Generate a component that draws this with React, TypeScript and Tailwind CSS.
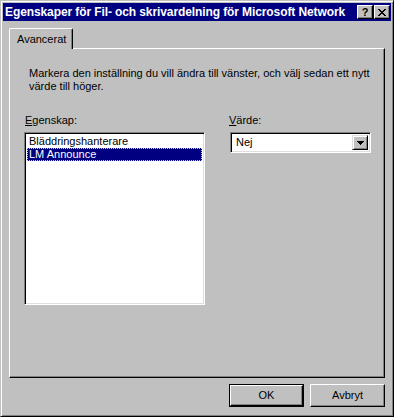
import React from "react";

const raised =
  "border border-t-white border-l-white border-r-black border-b-black shadow-[inset_-1px_-1px_0_#808080]";
const sunken =
  "border border-t-[#808080] border-l-[#808080] border-r-white border-b-white shadow-[inset_1px_1px_0_#000,inset_-1px_-1px_0_#dfdfdf]";

function TitleButton({ children }: { children: React.ReactNode }) {
  return (
    <div className={`w-[16px] h-[14px] bg-[#c0c0c0] flex items-center justify-center ${raised}`}>
      {children}
    </div>
  );
}

function PushButton({ label, isDefault }: { label: string; isDefault?: boolean }) {
  if (isDefault) {
    return (
      <div className="w-[75px] h-[23px] border border-black">
        <div
          className={`w-full h-full bg-[#c0c0c0] flex items-center justify-center ${raised}`}
        >
          {label}
        </div>
      </div>
    );
  }
  return (
    <div className={`w-[75px] h-[23px] bg-[#c0c0c0] flex items-center justify-center ${raised}`}>
      {label}
    </div>
  );
}

export default function App() {
  return (
    <div className="w-[394px] h-[417px] bg-[#c0c0c0] border border-t-[#c0c0c0] border-l-[#c0c0c0] border-r-black border-b-black shadow-[inset_1px_1px_0_#fff,inset_-1px_-1px_0_#808080] p-[2px] flex flex-col font-['Liberation_Sans',Arial,sans-serif] text-[11px] leading-[13px] text-black select-none">
      {/* title bar */}
      <div className="h-[18px] bg-[#000080] flex items-center pl-[2px] pr-[1px]">
        <span className="flex-1 text-white font-bold text-[12px] tracking-[-0.1px] whitespace-nowrap">
          Egenskaper för Fil- och skrivardelning för Microsoft Network
        </span>
        <div className="flex gap-[1px]">
          <TitleButton>
            <span className="font-bold text-[11px] leading-none mt-[1px]">?</span>
          </TitleButton>
          <TitleButton>
            <svg width="8" height="7" viewBox="0 0 8 7" shapeRendering="crispEdges">
              <path
                d="M0 0h2v1h-2zM6 0h2v1h-2zM1 1h2v1h-2zM5 1h2v1h-2zM2 2h4v1h-4zM3 3h2v1h-2zM2 4h4v1h-4zM1 5h2v1h-2zM5 5h2v1h-2zM0 6h2v1h-2zM6 6h2v1h-2z"
                fill="#000"
              />
            </svg>
          </TitleButton>
        </div>
      </div>

      {/* body */}
      <div className="flex-1 flex flex-col px-[6px] pt-[7px]">
        <div className="relative z-10 -mb-[1px] w-[64px] h-[21px] bg-[#c0c0c0] border-t border-l border-t-white border-l-white border-r border-r-black rounded-tl-[2px] rounded-tr-[2px] shadow-[inset_-1px_0_0_#808080] flex items-center pl-[7px]">
          Avancerat
        </div>
        <div className="h-[330px] bg-[#c0c0c0] border border-t-white border-l-white border-r-black border-b-black shadow-[inset_-1px_-1px_0_#808080] pt-[18px] pl-[14px] flex flex-col">
          <p className="ml-[5px] w-[345px]">
            Markera den inställning du vill ändra till vänster, och välj sedan ett nytt värde till höger.
          </p>
          <div className="flex mt-[21px] gap-[24px]">
            <div className="flex flex-col">
              <span className="ml-[1px]">
                <u>E</u>genskap:
              </span>
              <div className={`mt-[5px] w-[181px] h-[173px] bg-white ${sunken} p-[2px]`}>
                <div className="h-[13px] pl-[2px] whitespace-nowrap">Bläddringshanterare</div>
                <div className="h-[13px] bg-[#000080] text-white pl-[1px] border border-dotted border-[#c8c8ff] flex items-center whitespace-nowrap">
                  LM Announce
                </div>
              </div>
            </div>
            <div className="flex flex-col">
              <span>
                <u>V</u>ärde:
              </span>
              <div
                className={`mt-[5px] ml-[1px] w-[141px] h-[21px] bg-white ${sunken} p-[2px] flex items-center`}
              >
                <span className="flex-1 pl-[3px]">Nej</span>
                <div
                  className={`w-[16px] h-full bg-[#c0c0c0] border border-t-[#dfdfdf] border-l-[#dfdfdf] border-r-black border-b-black shadow-[inset_1px_1px_0_#fff,inset_-1px_-1px_0_#808080] flex items-center justify-center`}
                >
                  <svg width="7" height="4" viewBox="0 0 7 4" shapeRendering="crispEdges">
                    <path d="M0 0h7v1h-7zM1 1h5v1h-5zM2 2h3v1h-3zM3 3h1v1h-1z" fill="#000" />
                  </svg>
                </div>
              </div>
            </div>
          </div>
        </div>
        <div className="flex justify-end gap-[6px] mt-[6px]">
          <PushButton label="OK" isDefault />
          <PushButton label="Avbryt" />
        </div>
      </div>
    </div>
  );
}
